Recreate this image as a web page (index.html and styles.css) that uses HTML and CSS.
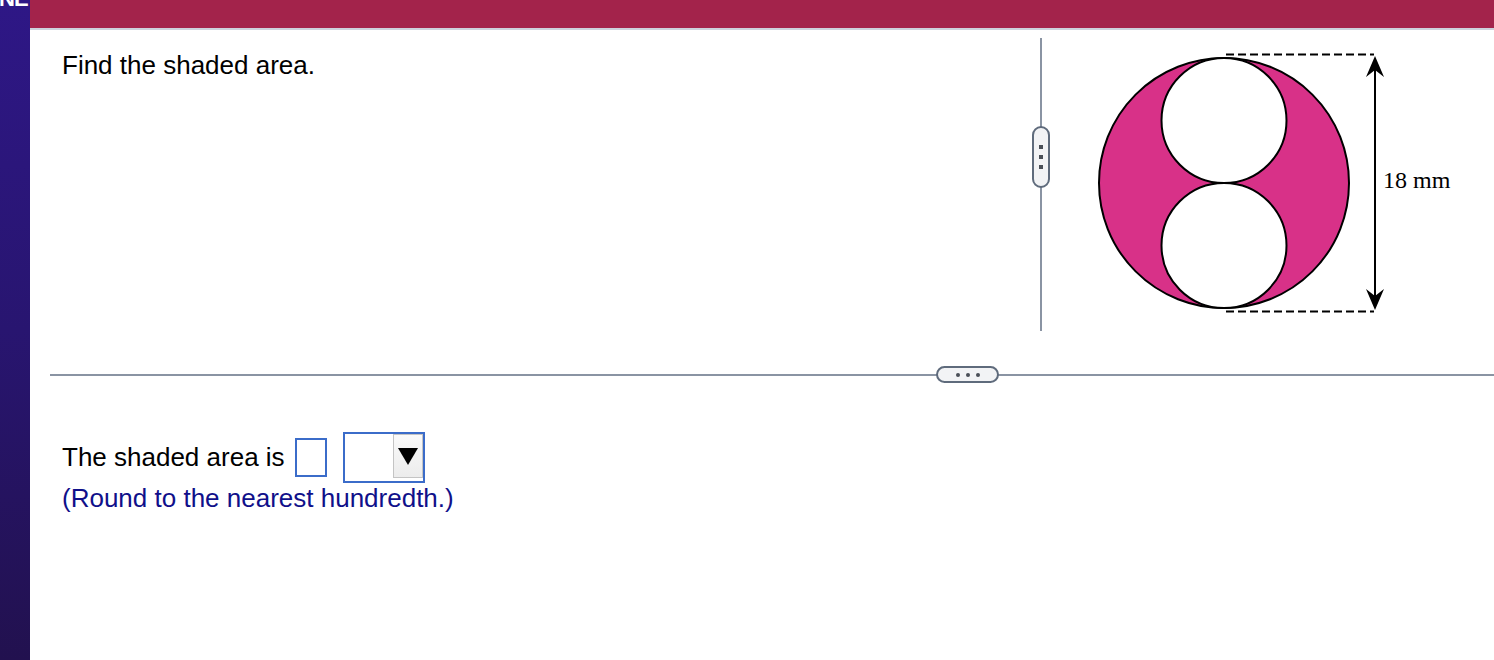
FILE: index.html
```html
<!DOCTYPE html>
<html>
<head>
<meta charset="utf-8">
<link rel="stylesheet" href="styles.css">
</head>
<body>
<div class="app">
  <aside class="side"><span class="side-label">NE</span></aside>
  <main class="main">
    <header class="topbar"></header>
    <section class="upper">
      <div class="question">
        <p class="prompt">Find the shaded area.</p>
      </div>
      <div class="vdivider">
        <div class="vhandle"><i></i><i></i><i></i></div>
      </div>
      <div class="figure">
        <svg class="fig-svg" width="452" height="344" viewBox="0 0 452 344">
          <circle cx="182" cy="153" r="125" fill="#d83188" stroke="#000" stroke-width="2"/>
          <circle cx="182" cy="90.5" r="62.5" fill="#fff" stroke="#000" stroke-width="2"/>
          <circle cx="182" cy="215.5" r="62.5" fill="#fff" stroke="#000" stroke-width="2"/>
          <line x1="184" y1="24.5" x2="332" y2="24.5" stroke="#000" stroke-width="2" stroke-dasharray="8,4"/>
          <line x1="184" y1="281.5" x2="332" y2="281.5" stroke="#000" stroke-width="2" stroke-dasharray="8,4"/>
          <line x1="333" y1="36" x2="333" y2="270" stroke="#000" stroke-width="2"/>
          <polygon points="333,26 342,47 333,40 324,47" fill="#000"/>
          <polygon points="333,280 342,259 333,266 324,259" fill="#000"/>
          <text x="341" y="158" class="fig-label">18 mm</text>
        </svg>
      </div>
    </section>
    <div class="hdivider">
      <div class="hhandle"><i></i><i></i><i></i></div>
    </div>
    <section class="answer">
      <div class="answer-row">
        <span class="answer-text">The shaded area is</span>
        <span class="num-box"></span>
        <span class="unit-select"><span class="select-btn"><span class="tri"></span></span></span>
      </div>
      <p class="hint">(Round to the nearest hundredth.)</p>
    </section>
  </main>
</div>
</body>
</html>
```
FILE: styles.css
```css
* { box-sizing: border-box; }
html, body { margin: 0; padding: 0; }
body {
  width: 1494px;
  height: 660px;
  overflow: hidden;
  background: #fff;
  font-family: "Liberation Sans", Arial, sans-serif;
}
.app {
  display: flex;
  height: 660px;
}
.side {
  width: 30px;
  flex: none;
  background: linear-gradient(180deg, #2e1786 0%, #281570 50%, #22114f 100%);
  overflow: hidden;
}
.side-label {
  display: block;
  color: #fff;
  font-weight: bold;
  font-size: 22px;
  line-height: 22px;
  margin-top: -12px;
  margin-left: -1px;
  letter-spacing: -1px;
}
.main {
  flex: 1;
  display: flex;
  flex-direction: column;
}
.topbar {
  height: 30px;
  background: #a3234b;
  border-bottom: 2px solid #cdd1dc;
  flex: none;
}
.upper {
  display: flex;
  height: 344px;
  flex: none;
}
.question {
  width: 1010px;
  padding: 20px 0 0 32px;
}
.prompt {
  margin: 0;
  font-size: 26px;
  color: #000;
}
.vdivider {
  width: 2px;
  margin-top: 8px;
  height: 293px;
  background: #8a94a3;
  position: relative;
}
.vhandle {
  position: absolute;
  left: -8px;
  top: 88px;
  width: 18px;
  height: 62px;
  border: 2px solid #5f6b7c;
  border-radius: 9px;
  background: #f2f3f5;
  display: flex;
  flex-direction: column;
  align-items: center;
  justify-content: center;
  gap: 6px;
}
.vhandle i, .hhandle i {
  display: block;
  width: 4px;
  height: 4px;
  background: #4a4f57;
}
.hhandle i { border-radius: 50%; }
.figure {
  flex: 1;
}
.fig-svg { display: block; }
.fig-label {
  font-family: "Liberation Serif", "Times New Roman", serif;
  font-size: 24px;
  fill: #000;
}
.hdivider {
  margin-left: 20px;
  height: 2px;
  background: #8a94a3;
  position: relative;
  flex: none;
}
.hhandle {
  position: absolute;
  left: 886px;
  top: -8px;
  width: 63px;
  height: 17px;
  border: 2px solid #5f6b7c;
  border-radius: 9px;
  background: #f2f3f5;
  display: flex;
  align-items: center;
  justify-content: center;
  gap: 6px;
}
.answer {
  padding: 56px 0 0 32px;
}
.answer-row {
  display: flex;
  align-items: center;
  height: 51px;
}
.answer-text {
  font-size: 26px;
  color: #000;
  margin-right: 10px;
}
.num-box {
  width: 32px;
  height: 39px;
  border: 2px solid #3b6cc9;
  margin-right: 16px;
}
.unit-select {
  width: 82px;
  height: 51px;
  border: 2px solid #3b6cc9;
  display: flex;
  justify-content: flex-end;
  align-items: flex-start;
}
.select-btn {
  width: 30px;
  height: 44px;
  border: 1px solid #c4c4c4;
  background: linear-gradient(180deg, #fafafa 0%, #ececec 100%);
  display: flex;
  align-items: center;
  justify-content: center;
}
.tri {
  width: 0;
  height: 0;
  border-left: 10px solid transparent;
  border-right: 10px solid transparent;
  border-top: 17px solid #000;
}
.hint {
  margin: 0;
  font-size: 26px;
  color: #10108a;
}
```
